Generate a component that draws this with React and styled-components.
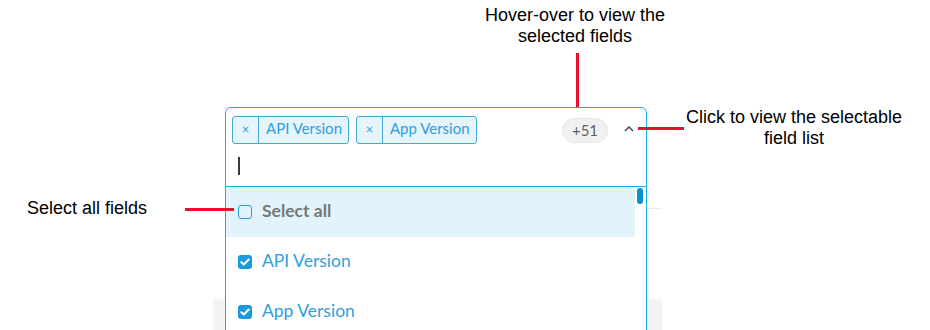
import React from 'react';
import styled, { createGlobalStyle } from 'styled-components';

const GlobalStyle = createGlobalStyle`
	html, body {
		margin: 0;
		padding: 0;
		background: #ffffff;
	}
`;

const Stage = styled.div`
	position: relative;
	width: 930px;
	height: 330px;
	overflow: hidden;
	padding-left: 214px;
	box-sizing: border-box;
	font-family: "Liberation Sans", Arial, sans-serif;
`;

const BackCard = styled.div`
	width: 448px;
	margin-top: 208px;
	height: 94px;
	border-top: 1px solid #ececec;
	box-sizing: border-box;
`;

const BackFooter = styled.div`
	width: 448px;
	height: 40px;
	background: #f1f2f4;
	box-shadow: 0 -3px 4px rgba(0, 0, 0, 0.06);
`;

const Dropdown = styled.div`
	position: absolute;
	left: 225px;
	top: 107px;
	width: 422px;
	height: 260px;
	border: 1px solid #1aaee2;
	border-radius: 6px 6px 0 0;
	background: #ffffff;
	box-sizing: border-box;
	font-family: Lato, "Open Sans", sans-serif;
`;

const Header = styled.div`
	display: flex;
	align-items: center;
	padding: 7px 12px 0 6px;
	height: 36px;
	box-sizing: border-box;
`;

const Tags = styled.div`
	display: flex;
	gap: 7px;
	flex: 1;
`;

const Tag = styled.div`
	display: flex;
	align-items: stretch;
	height: 28px;
	border: 1px solid #45a9dc;
	border-radius: 3px;
	background: #e6f4fb;
	color: #2f9fdc;
	box-sizing: border-box;
	font-size: 15px;
`;

const TagClose = styled.span`
	width: 25px;
	display: flex;
	align-items: center;
	justify-content: center;
	border-right: 1px solid #45a9dc;
	font-size: 13px;
	padding-bottom: 1px;
`;

const TagLabel = styled.span`
	display: flex;
	align-items: center;
	padding: 0 6px 3px 7px;
`;

const Count = styled.span`
	height: 25px;
	width: 46px;
	border-radius: 13px;
	background: #f1f1f1;
	border: 1px solid #e6e6e6;
	box-sizing: border-box;
	display: flex;
	align-items: center;
	justify-content: center;
	color: #606060;
	font-size: 15px;
	padding-bottom: 1px;
	margin-top: 2px;
	margin-right: 16px;
`;

const Caret = styled.svg`
	width: 10px;
	height: 6px;
	margin-top: -2px;
`;

const InputRow = styled.div`
	height: 42px;
	padding-left: 12px;
	display: flex;
	align-items: center;
	border-bottom: 1px solid #1aaee2;
`;

const Cursor = styled.span`
	width: 2px;
	height: 18px;
	background: #3a3a3a;
	margin-top: 2px;
`;

const List = styled.div`
	display: flex;
`;

const Rows = styled.div`
	flex: 1;
`;

const Row = styled.div`
	height: 50px;
	display: flex;
	align-items: center;
	padding-left: 12px;
	gap: 10px;
	background: ${(p) => (p.$active ? '#e2f3fb' : 'transparent')};
`;

const Box = styled.span`
	width: 14px;
	height: 14px;
	border-radius: 3px;
	box-sizing: border-box;
	display: flex;
	align-items: center;
	justify-content: center;
	border: ${(p) => (p.$checked ? 'none' : '1.5px solid #2a9fd8')};
	background: ${(p) => (p.$checked ? '#1a9be0' : 'transparent')};
`;

const Label = styled.span`
	font-size: 17.5px;
	padding-bottom: 3px;
	color: ${(p) => (p.$muted ? '#787878' : '#2ea0dc')};
	font-weight: ${(p) => (p.$muted ? 700 : 400)};
`;

const Track = styled.div`
	width: 11px;
	padding: 1px 3px 0 2px;
	box-sizing: border-box;
`;

const Thumb = styled.div`
	height: 16px;
	border-radius: 3px;
	background: #0d8fd6;
`;

const Note = styled.div`
	position: absolute;
	left: ${(p) => p.$x}px;
	top: ${(p) => p.$y}px;
	width: ${(p) => p.$w}px;
	font-size: 18px;
	line-height: 21px;
	color: #000000;
	text-align: ${(p) => p.$align || 'center'};
`;

const Line = styled.div`
	position: absolute;
	left: ${(p) => p.$x}px;
	top: ${(p) => p.$y}px;
	width: ${(p) => p.$w}px;
	height: ${(p) => p.$h}px;
	background: #e8102c;
`;

const Check = () => (
	<svg width="10" height="8" viewBox="0 0 10 8">
		<path d="M1.3 4.2 L3.8 6.5 L8.7 1.5" fill="none" stroke="#fff" strokeWidth="2" strokeLinecap="round" strokeLinejoin="round" />
	</svg>
);

const fields = ['API Version', 'App Version'];

export default function App() {
	return (
		<>
			<GlobalStyle />
			<Stage>
				<BackCard />
				<BackFooter />

				<Dropdown>
					<Header>
						<Tags>
							{fields.map((f) => (
								<Tag key={f}>
									<TagClose>×</TagClose>
									<TagLabel>{f}</TagLabel>
								</Tag>
							))}
						</Tags>
						<Count>+51</Count>
						<Caret viewBox="0 0 10 6">
							<path d="M1 5 L5 1 L9 5" fill="none" stroke="#4a4a4a" strokeWidth="1.5" />
						</Caret>
					</Header>
					<InputRow>
						<Cursor />
					</InputRow>
					<List>
						<Rows>
							<Row $active>
								<Box />
								<Label $muted>Select all</Label>
							</Row>
							{fields.map((f) => (
								<Row key={f}>
									<Box $checked><Check /></Box>
									<Label>{f}</Label>
								</Row>
							))}
						</Rows>
						<Track>
							<Thumb />
						</Track>
					</List>
				</Dropdown>

				<Note $x={455} $y={5} $w={240}>Hover-over to view the<br />selected fields</Note>
				<Line $x={576} $y={53} $w={3} $h={54} />

				<Note $x={669} $y={107} $w={250}>Click to view the selectable<br />field list</Note>
				<Line $x={638} $y={127} $w={46} $h={3} />

				<Note $x={27} $y={198} $w={160} $align="left">Select all fields</Note>
				<Line $x={185} $y={208} $w={49} $h={3} />
			</Stage>
		</>
	);
}
